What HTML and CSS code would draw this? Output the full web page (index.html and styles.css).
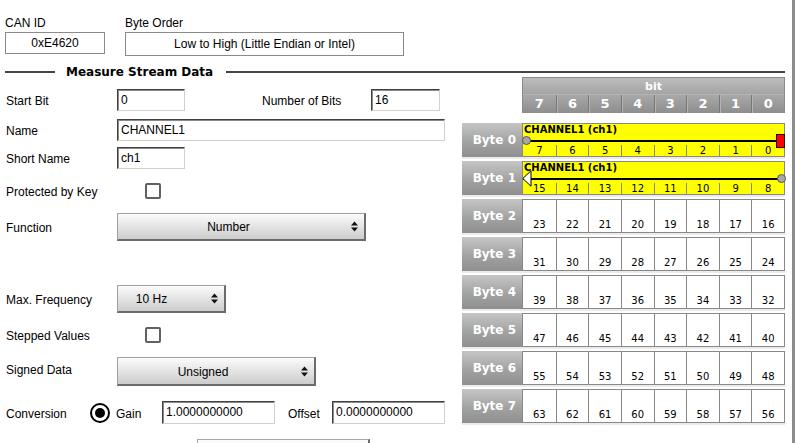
FILE: index.html
```html
<!DOCTYPE html>
<html>
<head>
<meta charset="utf-8">
<title>Measure Stream Data</title>
<link rel="stylesheet" href="styles.css">
</head>
<body>
<div class="page">
  <div class="top">
    <div class="field">
      <div class="cap">CAN ID</div>
      <div class="box can-box">0xE4620</div>
    </div>
    <div class="field">
      <div class="cap">Byte Order</div>
      <div class="box order-box">Low to High (Little Endian or Intel)</div>
    </div>
  </div>

  <div class="legend">
    <span class="rule short"></span>
    <span class="legend-text">Measure Stream Data</span>
    <span class="rule long"></span>
  </div>

  <div class="content">
    <div class="form">
      <div class="row r1">
        <span class="lbl">Start Bit</span>
        <div class="input w68">0</div>
        <span class="lbl2">Number of Bits</span>
        <div class="input w69">16</div>
      </div>
      <div class="row r2">
        <span class="lbl">Name</span>
        <div class="input wname">CHANNEL1</div>
      </div>
      <div class="row r3">
        <span class="lbl">Short Name</span>
        <div class="input w68">ch1</div>
      </div>
      <div class="row r4">
        <span class="lbl">Protected by Key</span>
        <div class="chk"></div>
      </div>
      <div class="row r5">
        <span class="lbl">Function</span>
        <div class="sel sel-func">
          <span class="sel-txt">Number</span>
          <span class="sel-arrow"><svg width="7" height="11" viewBox="0 0 7 11"><polygon points="0,4.5 3.5,0.5 7,4.5" fill="#111"/><polygon points="0,6.5 3.5,10.5 7,6.5" fill="#111"/></svg></span>
        </div>
      </div>
      <div class="row r6">
        <span class="lbl">Max. Frequency</span>
        <div class="sel sel-freq">
          <span class="sel-txt">10 Hz</span>
          <span class="sel-arrow"><svg width="7" height="11" viewBox="0 0 7 11"><polygon points="0,4.5 3.5,0.5 7,4.5" fill="#111"/><polygon points="0,6.5 3.5,10.5 7,6.5" fill="#111"/></svg></span>
        </div>
      </div>
      <div class="row r7">
        <span class="lbl">Stepped Values</span>
        <div class="chk"></div>
      </div>
      <div class="row r8">
        <span class="lbl lbl-up">Signed Data</span>
        <div class="sel sel-sign">
          <span class="sel-txt">Unsigned</span>
          <span class="sel-arrow"><svg width="7" height="11" viewBox="0 0 7 11"><polygon points="0,4.5 3.5,0.5 7,4.5" fill="#111"/><polygon points="0,6.5 3.5,10.5 7,6.5" fill="#111"/></svg></span>
        </div>
      </div>
      <div class="row r9">
        <span class="lbl lbl-conv">Conversion</span>
        <span class="radio"><span class="radio-dot"></span></span>
        <span class="gain">Gain</span>
        <div class="input w113">1.0000000000</div>
        <span class="offset">Offset</span>
        <div class="input w113">0.0000000000</div>
      </div>
      <div class="row r10">
        <div class="btn"></div>
      </div>
    </div>

    <div class="bits">
      <div class="bit-head">
        <div class="bit-title">bit</div>
        <div class="bit-nums">
          <span>7</span><span>6</span><span>5</span><span>4</span><span>3</span><span>2</span><span>1</span><span>0</span>
        </div>
      </div>

      <div class="byte-rows">
        <div class="byte-row">
          <div class="byte-lbl">Byte 0</div>
          <div class="cells sig">
            <div class="sig-name">CHANNEL1 (ch1)</div>
            <div class="track">
              <span class="dot dot-left"></span>
              <span class="endmark"></span>
            </div>
            <div class="nums"><span>7</span><span>6</span><span>5</span><span>4</span><span>3</span><span>2</span><span>1</span><span>0</span></div>
          </div>
        </div>
        <div class="byte-row">
          <div class="byte-lbl">Byte 1</div>
          <div class="cells sig">
            <div class="sig-name">CHANNEL1 (ch1)</div>
            <div class="track">
              <svg class="tri" width="10" height="17" viewBox="0 0 10 17"><polygon points="9,0.8 0.8,8.5 9,16.2" fill="#fff" stroke="#000" stroke-width="1"/></svg>
              <span class="dot dot-right"></span>
            </div>
            <div class="nums"><span>15</span><span>14</span><span>13</span><span>12</span><span>11</span><span>10</span><span>9</span><span>8</span></div>
          </div>
        </div>
        <div class="byte-row">
          <div class="byte-lbl">Byte 2</div>
          <div class="cells"><span class="cell">23</span><span class="cell">22</span><span class="cell">21</span><span class="cell">20</span><span class="cell">19</span><span class="cell">18</span><span class="cell">17</span><span class="cell">16</span></div>
        </div>
        <div class="byte-row">
          <div class="byte-lbl">Byte 3</div>
          <div class="cells"><span class="cell">31</span><span class="cell">30</span><span class="cell">29</span><span class="cell">28</span><span class="cell">27</span><span class="cell">26</span><span class="cell">25</span><span class="cell">24</span></div>
        </div>
        <div class="byte-row">
          <div class="byte-lbl">Byte 4</div>
          <div class="cells"><span class="cell">39</span><span class="cell">38</span><span class="cell">37</span><span class="cell">36</span><span class="cell">35</span><span class="cell">34</span><span class="cell">33</span><span class="cell">32</span></div>
        </div>
        <div class="byte-row">
          <div class="byte-lbl">Byte 5</div>
          <div class="cells"><span class="cell">47</span><span class="cell">46</span><span class="cell">45</span><span class="cell">44</span><span class="cell">43</span><span class="cell">42</span><span class="cell">41</span><span class="cell">40</span></div>
        </div>
        <div class="byte-row">
          <div class="byte-lbl">Byte 6</div>
          <div class="cells"><span class="cell">55</span><span class="cell">54</span><span class="cell">53</span><span class="cell">52</span><span class="cell">51</span><span class="cell">50</span><span class="cell">49</span><span class="cell">48</span></div>
        </div>
        <div class="byte-row">
          <div class="byte-lbl">Byte 7</div>
          <div class="cells"><span class="cell">63</span><span class="cell">62</span><span class="cell">61</span><span class="cell">60</span><span class="cell">59</span><span class="cell">58</span><span class="cell">57</span><span class="cell">56</span></div>
        </div>
      </div>
    </div>
  </div>
</div>
</body>
</html>
```

FILE: styles.css
```css
html, body {
  margin: 0;
  padding: 0;
  background: #fff;
}
body {
  font-family: "Liberation Sans", Arial, sans-serif;
  font-size: 12px;
  color: #000;
}
.page {
  width: 792px;
  height: 443px;
  border-right: 3px solid #8c8c8c;
  overflow: hidden;
}

/* top fields */
.top {
  display: flex;
  gap: 20px;
  padding: 16px 0 0 5px;
}
.cap {
  height: 14px;
  line-height: 14px;
}
.box {
  margin-top: 2px;
  box-sizing: border-box;
  border: 1px solid #8a8a8a;
  background: #fff;
  text-align: center;
}
.can-box {
  width: 100px;
  height: 22px;
  line-height: 21px;
}
.order-box {
  width: 279px;
  height: 24px;
  line-height: 23px;
}

/* group legend */
.legend {
  display: flex;
  align-items: center;
  width: 785px;
  box-sizing: border-box;
  padding-left: 5px;
  height: 12px;
  margin-top: 10px;
}
.rule {
  height: 2px;
  background: #444;
}
.short { width: 50px; flex: none; }
.long { flex: 1; }
.legend-text {
  font-family: "DejaVu Sans", Verdana, sans-serif;
  font-weight: bold;
  font-size: 12px;
  margin: 0 13px 0 11px;
  white-space: nowrap;
}

/* content */
.content {
  display: flex;
  align-items: flex-start;
}
.form {
  width: 462px;
  flex: none;
  padding-top: 11px;
}
.row {
  display: flex;
  align-items: center;
}
.r1 { height: 22px; }
.r2 { height: 22px; margin-top: 8px; }
.r3 { height: 22px; margin-top: 6px; }
.r4 { height: 22px; margin-top: 11px; }
.r5 { height: 28px; margin-top: 11px; }
.r6 { height: 28px; margin-top: 44px; }
.r7 { height: 22px; margin-top: 11px; }
.r8 { height: 29px; margin-top: 11px; }
.r9 { height: 23px; margin-top: 15px; }
.r10 { margin-top: 15px; }

.lbl {
  width: 111px;
  padding-left: 6px;
  padding-top: 2px;
  flex: none;
  white-space: nowrap;
}
.lbl-up { padding-top: 0; padding-bottom: 3px; }
.lbl-conv { width: 84px; }
.lbl2 {
  margin-left: 77px;
  width: 109px;
  padding-top: 2px;
  flex: none;
}

.input {
  height: 100%;
  box-sizing: border-box;
  border: 1px solid;
  border-color: #404040 #d4d0c8 #d4d0c8 #404040;
  box-shadow: inset 1px 1px 0 #8a8a8a;
  background: #fff;
  padding-left: 3px;
  line-height: 21px;
  white-space: nowrap;
  overflow: hidden;
  flex: none;
}
.w68 { width: 68px; }
.w69 { width: 69px; }
.wname { width: 328px; }
.w113 { width: 113px; }

.chk {
  width: 16px;
  height: 16px;
  box-sizing: border-box;
  border: 2px solid #606060;
  border-radius: 2px;
  background: #fff;
  margin-left: 28px;
}

.sel {
  height: 100%;
  box-sizing: border-box;
  border: 1px solid #a0a0a0;
  border-right: 2px solid #6c6c6c;
  border-bottom: 2px solid #6c6c6c;
  background: linear-gradient(#fcfcfc, #e6e6e6 45%, #cccccc);
  display: flex;
  align-items: center;
  flex: none;
}
.sel-txt {
  flex: 1;
  text-align: center;
  padding-top: 1px;
}
.sel-arrow {
  display: flex;
  justify-content: flex-end;
  padding-right: 6px;
  flex: none;
}
.sel-func { width: 249px; }
.sel-func .sel-arrow { width: 19px; }
.sel-freq { width: 109px; }
.sel-freq .sel-arrow { width: 33px; }
.sel-sign { width: 199px; }
.sel-sign .sel-arrow { width: 20px; }

.radio {
  width: 20px;
  height: 20px;
  box-sizing: border-box;
  border: 2px solid #000;
  border-radius: 50%;
  background: #fff;
  display: flex;
  align-items: center;
  justify-content: center;
  flex: none;
}
.radio-dot {
  width: 10px;
  height: 10px;
  border-radius: 50%;
  background: #000;
}
.gain {
  margin-left: 6px;
  width: 46px;
  padding-top: 2px;
  flex: none;
}
.offset {
  margin-left: 13px;
  width: 44px;
  padding-top: 2px;
  flex: none;
}
.btn {
  margin-left: 197px;
  width: 173px;
  height: 30px;
  box-sizing: border-box;
  border: 1px solid #a8a8a8;
  border-right: 2px solid #6c6c6c;
  background: linear-gradient(#fcfcfc, #e2e2e2);
}

/* bit map */
.bits {
  width: 323px;
  flex: none;
  margin-top: -1px;
}
.bit-head {
  margin-left: 60px;
  width: 263px;
  box-sizing: border-box;
  border: 1px solid #8a8a8a;
  border-bottom: none;
  color: #fff;
  font-family: "DejaVu Sans", Verdana, sans-serif;
  font-weight: bold;
}
.bit-title {
  height: 17px;
  line-height: 17px;
  text-align: center;
  font-size: 11px;
  background: linear-gradient(#bdbdbd, #a4a4a4);
  border-bottom: 1px solid #b5b5b5;
  box-sizing: border-box;
}
.bit-nums {
  height: 18px;
  display: grid;
  grid-template-columns: repeat(8, 1fr);
  background: linear-gradient(#a8a8a8, #8e8e8e);
  font-size: 13px;
  line-height: 18px;
}
.bit-nums span {
  text-align: center;
  border-left: 1px solid #777;
  box-shadow: inset 1px 0 0 #b4b4b4;
}
.bit-nums span:first-child {
  border-left: none;
  box-shadow: none;
}

.byte-rows {
  margin-top: 10px;
  display: flex;
  flex-direction: column;
  gap: 4px;
}
.byte-row {
  display: flex;
  height: 34px;
  box-shadow: 0 2px 0 #ebebeb;
}
.byte-lbl {
  width: 60px;
  flex: none;
  box-sizing: border-box;
  padding-right: 6px;
  display: flex;
  align-items: center;
  justify-content: flex-end;
  color: #fff;
  font-family: "DejaVu Sans", Verdana, sans-serif;
  font-weight: bold;
  font-size: 12px;
  background: linear-gradient(#c6c6c6, #a2a2a2 55%, #8f8f8f);
}
.cells {
  width: 263px;
  flex: none;
  box-sizing: border-box;
  border: 1px solid #888;
  background: #fff;
  display: grid;
  grid-template-columns: repeat(8, 1fr);
  font-family: "DejaVu Sans", Verdana, sans-serif;
  font-size: 10px;
}
.cell {
  border-left: 1px solid #888;
  display: flex;
  align-items: flex-end;
  justify-content: center;
  line-height: 12px;
  padding-bottom: 1px;
}
.cell:first-child { border-left: none; }

.cells.sig {
  display: flex;
  flex-direction: column;
  background: #ffff00;
}
.sig-name {
  height: 12px;
  line-height: 12px;
  padding-left: 1px;
  font-weight: bold;
  white-space: nowrap;
}
.track {
  height: 9px;
  position: relative;
}
.track::before {
  content: "";
  position: absolute;
  left: 0;
  right: 0;
  top: 4px;
  height: 2px;
  background: #000;
}
.dot {
  position: absolute;
  top: 0;
  width: 9px;
  height: 9px;
  box-sizing: border-box;
  border-radius: 50%;
  background: #a8a8a8;
  border: 1px solid #555;
}
.dot-left { left: -1px; }
.dot-right { right: -2px; }
.endmark {
  position: absolute;
  right: -1px;
  top: -2px;
  width: 9px;
  height: 14px;
  box-sizing: border-box;
  background: #f00;
  border: 1px solid #300;
}
.tri {
  position: absolute;
  left: -1px;
  top: -4px;
}
.nums {
  flex: 1;
  display: grid;
  grid-template-columns: repeat(8, 1fr);
  line-height: 11px;
}
.nums span {
  text-align: center;
  border-left: 1px solid #888;
}
.nums span:first-child { border-left: none; }
```
